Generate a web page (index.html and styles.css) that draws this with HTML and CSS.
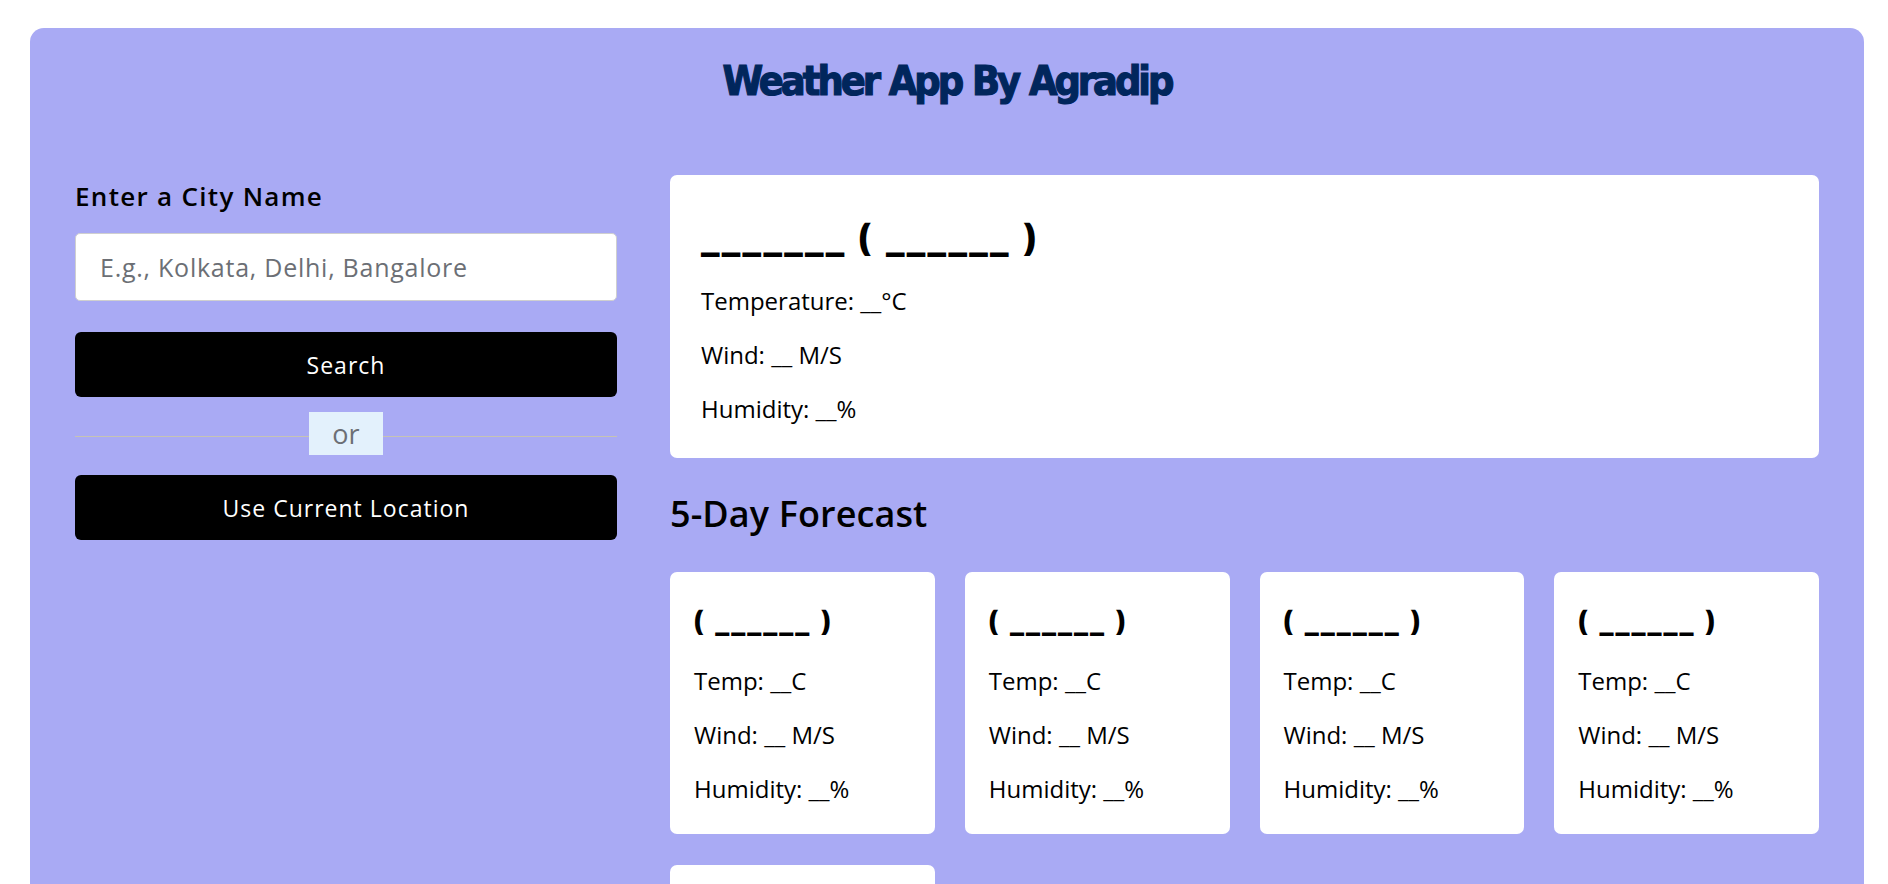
FILE: index.html
```html
<!DOCTYPE html>
<html lang="en">
<head>
<meta charset="utf-8">
<title>Weather App By Agradip</title>
<link rel="stylesheet" href="styles.css">
</head>
<body>
<div class="app">
  <h1 class="title">Weather App By Agradip</h1>
  <div class="main">
    <aside class="search">
      <label class="label" for="city">Enter a City Name</label>
      <input id="city" class="city-input" type="text" placeholder="E.g., Kolkata, Delhi, Bangalore">
      <button class="btn">Search</button>
      <div class="sep"><span class="sep-text">or</span></div>
      <button class="btn">Use Current Location</button>
    </aside>
    <section class="weather">
      <div class="current">
        <h2 class="current-title">_______ ( ______ )</h2>
        <p class="line">Temperature: __°C</p>
        <p class="line">Wind: __ M/S</p>
        <p class="line">Humidity: __%</p>
      </div>
      <h2 class="forecast-title">5-Day Forecast</h2>
      <ul class="days">
        <li class="day"><h3 class="day-title">( ______ )</h3><p class="line">Temp: __C</p><p class="line">Wind: __ M/S</p><p class="line">Humidity: __%</p></li>
        <li class="day"><h3 class="day-title">( ______ )</h3><p class="line">Temp: __C</p><p class="line">Wind: __ M/S</p><p class="line">Humidity: __%</p></li>
        <li class="day"><h3 class="day-title">( ______ )</h3><p class="line">Temp: __C</p><p class="line">Wind: __ M/S</p><p class="line">Humidity: __%</p></li>
        <li class="day"><h3 class="day-title">( ______ )</h3><p class="line">Temp: __C</p><p class="line">Wind: __ M/S</p><p class="line">Humidity: __%</p></li>
        <li class="day"><h3 class="day-title">( ______ )</h3><p class="line">Temp: __C</p><p class="line">Wind: __ M/S</p><p class="line">Humidity: __%</p></li>
      </ul>
    </section>
  </div>
</div>
</body>
</html>
```

FILE: styles.css
```css
* { box-sizing: border-box; }
html, body { margin: 0; padding: 0; background: #fff; }
body {
  font-family: "Open Sans", "Noto Sans", sans-serif;
  font-size: 24px;
  line-height: 30px;
  color: #000;
}
.app {
  margin: 28px 24px 0 30px;
  background: #a9aaf4;
  border-radius: 14px;
  padding: 28px 45px 60px;
  min-height: 1200px;
}
.title {
  margin: 0;
  text-align: center;
  font-family: "DejaVu Sans Condensed", "DejaVu Sans", sans-serif;
  font-stretch: condensed;
  font-weight: 700;
  font-size: 41px;
  line-height: 50px;
  letter-spacing: -3px;
  word-spacing: 1px;
  -webkit-text-stroke: 1.2px #01265c;
  color: #01265c;
}
.main {
  display: flex;
  gap: 53px;
  margin-top: 69px;
  align-items: flex-start;
}
.search {
  flex: 0 0 542px;
  display: flex;
  flex-direction: column;
  padding-top: 6px;
}
.label {
  font-weight: 600;
  font-size: 26px;
  line-height: 30px;
  letter-spacing: 1.3px;
  margin-bottom: 22px;
}
.city-input {
  height: 68px;
  border: 1px solid #cfcfcf;
  border-radius: 5px;
  padding: 0 24px;
  font-family: inherit;
  font-size: 25px;
  letter-spacing: 0.75px;
  color: #333;
  background: #fff;
  outline: none;
}
.city-input::placeholder { color: #6c6f75; }
.btn {
  height: 65px;
  border: 0;
  border-radius: 6px;
  background: #000;
  color: #fff;
  font-family: inherit;
  font-size: 23px;
  font-weight: 500;
  letter-spacing: 1px;
  cursor: pointer;
}
.city-input + .btn { margin-top: 31px; }
.sep {
  position: relative;
  height: 43px;
  margin: 15px 0 20px;
  display: flex;
  justify-content: center;
}
.sep::before {
  content: "";
  position: absolute;
  left: 0;
  right: 0;
  top: 24px;
  height: 1px;
  background: #c6c3b3;
}
.sep-text {
  position: relative;
  background: #e3f1fc;
  color: #6c6f75;
  font-size: 27px;
  line-height: 43px;
  padding: 0 23px;
}
.weather {
  flex: 1 1 auto;
  min-width: 0;
}
.current {
  background: #fff;
  border-radius: 7px;
  padding: 39px 31px 34px;
}
.current-title {
  margin: 0 0 28px;
  font-size: 37px;
  line-height: 44px;
  font-weight: 800;
  letter-spacing: 2.3px;
  word-spacing: 0;
}
.line { margin: 0 0 24px; }
.line:last-child { margin-bottom: 0; }
.forecast-title {
  margin: 34px 0 36px;
  font-size: 36px;
  line-height: 44px;
  font-weight: 600;
  letter-spacing: 0.1px;
  color: #000;
}
.days {
  list-style: none;
  margin: 0;
  padding: 0;
  display: flex;
  flex-wrap: wrap;
  gap: 31px 30px;
}
.day {
  flex: 0 0 calc((100% - 90px) / 4);
  background: #fff;
  border-radius: 7px;
  padding: 31px 24px 30px;
}
.day-title {
  margin: 0 0 29px;
  font-size: 28px;
  line-height: 34px;
  font-weight: 800;
  letter-spacing: 2px;
  word-spacing: 0;
}
```
